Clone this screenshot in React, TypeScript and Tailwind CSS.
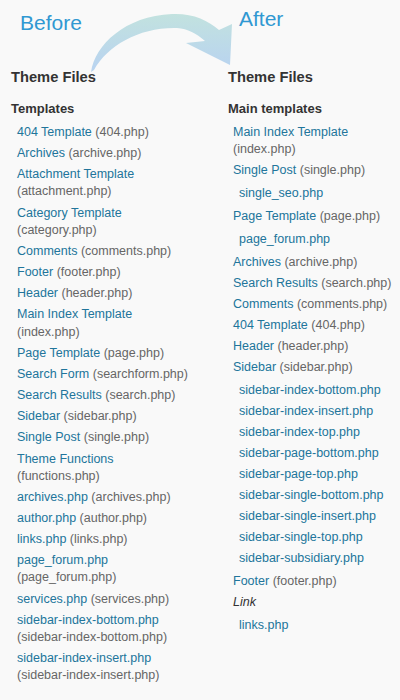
import React from 'react'

type Item = { name: string; file?: string; italic?: boolean; subs?: string[] }

const leftItems: Item[] = [
  { name: '404 Template', file: '404.php' },
  { name: 'Archives', file: 'archive.php' },
  { name: 'Attachment Template', file: 'attachment.php' },
  { name: 'Category Template', file: 'category.php' },
  { name: 'Comments', file: 'comments.php' },
  { name: 'Footer', file: 'footer.php' },
  { name: 'Header', file: 'header.php' },
  { name: 'Main Index Template', file: 'index.php' },
  { name: 'Page Template', file: 'page.php' },
  { name: 'Search Form', file: 'searchform.php' },
  { name: 'Search Results', file: 'search.php' },
  { name: 'Sidebar', file: 'sidebar.php' },
  { name: 'Single Post', file: 'single.php' },
  { name: 'Theme Functions', file: 'functions.php' },
  { name: 'archives.php', file: 'archives.php' },
  { name: 'author.php', file: 'author.php' },
  { name: 'links.php', file: 'links.php' },
  { name: 'page_forum.php', file: 'page_forum.php' },
  { name: 'services.php', file: 'services.php' },
  { name: 'sidebar-index-bottom.php', file: 'sidebar-index-bottom.php' },
  { name: 'sidebar-index-insert.php', file: 'sidebar-index-insert.php' },
]

const rightItems: Item[] = [
  { name: 'Main Index Template', file: 'index.php' },
  { name: 'Single Post', file: 'single.php', subs: ['single_seo.php'] },
  { name: 'Page Template', file: 'page.php', subs: ['page_forum.php'] },
  { name: 'Archives', file: 'archive.php' },
  { name: 'Search Results', file: 'search.php' },
  { name: 'Comments', file: 'comments.php' },
  { name: '404 Template', file: '404.php' },
  { name: 'Header', file: 'header.php' },
  {
    name: 'Sidebar',
    file: 'sidebar.php',
    subs: [
      'sidebar-index-bottom.php',
      'sidebar-index-insert.php',
      'sidebar-index-top.php',
      'sidebar-page-bottom.php',
      'sidebar-page-top.php',
      'sidebar-single-bottom.php',
      'sidebar-single-insert.php',
      'sidebar-single-top.php',
      'sidebar-subsidiary.php',
    ],
  },
  { name: 'Footer', file: 'footer.php' },
  { name: 'Link', italic: true, subs: ['links.php'] },
]

function FileList({ items }: { items: Item[] }) {
  return (
    <ul className="flex flex-col gap-1">
      {items.map(item => (
        <li key={item.name}>
          {item.italic ? (
            <div className="italic text-[#333]">{item.name}</div>
          ) : (
            <div>
              <span className="text-[#21759b]">{item.name}</span>{' '}
              <span className="text-[#666]">({item.file})</span>
            </div>
          )}
          {item.subs && (
            <ul className="flex flex-col gap-1 mt-[6px] pb-[2px] pl-[6px]">
              {item.subs.map(s => (
                <li key={s} className="text-[#21759b]">{s}</li>
              ))}
            </ul>
          )}
        </li>
      ))}
    </ul>
  )
}

function CurvedArrow() {
  return (
    <svg className="absolute left-0 top-0 pointer-events-none" width="240" height="80" viewBox="0 0 240 80">
      <defs>
        <linearGradient id="arrowGrad" x1="0" y1="14" x2="0" y2="66" gradientUnits="userSpaceOnUse">
          <stop offset="0" stopColor="#c2e2df" />
          <stop offset="1" stopColor="#b9d4ef" />
        </linearGradient>
      </defs>
      <path
        d="M 91 72 C 95 45, 125 16, 172 14 C 192 13, 208 20, 219 30 L 232 24 L 230 65 L 186 43 L 205 41 C 196 33, 188 29, 177 28 C 140 27, 108 45, 94 70 Z"
        fill="url(#arrowGrad)"
      />
    </svg>
  )
}

export default function App() {
  return (
    <div className="relative w-[400px] h-[700px] overflow-hidden bg-[#f9f9f9] font-['Liberation_Sans',Arial,sans-serif]">
      <CurvedArrow />
      <div className="relative flex">
        {/* Before */}
        <div className="w-[228px] pl-[11px] pr-[34px]">
          <div className="h-[68px]">
            <div className="pt-[11px] pl-[9px] text-[21px] leading-[24px] text-[#3098d2]">Before</div>
          </div>
          <h2 className="text-[14.7px] leading-[18px] font-bold text-[#333]">Theme Files</h2>
          <h3 className="mt-[14px] text-[13px] leading-[17px] font-bold text-[#333]">Templates</h3>
          <div className="mt-[7px] pl-[6px] text-[12.5px] leading-[17.15px]">
            <FileList items={leftItems} />
          </div>
        </div>

        {/* After */}
        <div className="flex-1">
          <div className="h-[68px]">
            <div className="pt-[7px] pl-[11px] text-[21px] leading-[24px] text-[#3098d2]">After</div>
          </div>
          <h2 className="text-[14.7px] leading-[18px] font-bold text-[#333]">Theme Files</h2>
          <h3 className="mt-[14px] text-[13px] leading-[17px] font-bold text-[#333]">Main templates</h3>
          <div className="mt-[7px] pl-[5px] text-[12.5px] leading-[17px]">
            <FileList items={rightItems} />
          </div>
        </div>
      </div>
    </div>
  )
}
